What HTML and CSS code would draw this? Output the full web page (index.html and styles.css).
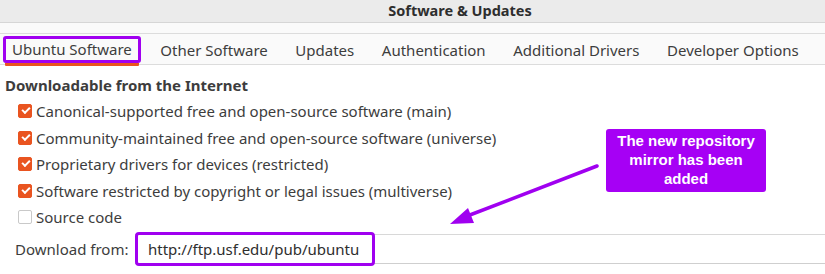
FILE: index.html
```html
<!DOCTYPE html>
<html lang="en">
<head>
    <meta charset="UTF-8">
    <title>Software &amp; Updates</title>
    <link rel="stylesheet" href="styles.css">
</head>
<body>
    <div class="window">
        <div class="titlebar">Software &amp; Updates</div>
        <div class="spacer"></div>
        <div class="tabs">
            <div class="tab active">Ubuntu Software</div>
            <div class="tab">Other Software</div>
            <div class="tab">Updates</div>
            <div class="tab">Authentication</div>
            <div class="tab">Additional Drivers</div>
            <div class="tab">Developer Options</div>
        </div>
        <div class="content">
            <h3>Downloadable from the Internet</h3>
            <label class="check"><span class="box on"></span>Canonical-supported free and open-source software (main)</label>
            <label class="check"><span class="box on"></span>Community-maintained free and open-source software (universe)</label>
            <label class="check"><span class="box on"></span>Proprietary drivers for devices (restricted)</label>
            <label class="check"><span class="box on"></span>Software restricted by copyright or legal issues (multiverse)</label>
            <label class="check"><span class="box"></span>Source code</label>
            <div class="download">
                <span class="download-label">Download from:</span>
                <div class="field">
                    <span class="field-value">http://ftp.usf.edu/pub/ubuntu</span>
                </div>
            </div>
        </div>

        <div class="callout">The new repository mirror has been added</div>
        <svg class="arrow" width="825" height="274" viewBox="0 0 825 274">
            <line x1="597" y1="166" x2="462" y2="218" stroke="#a000f0" stroke-width="3.5" stroke-linecap="round"/>
            <polygon points="450,224 468,208 474,223" fill="#a000f0"/>
        </svg>
    </div>
</body>
</html>
```

FILE: styles.css
```css
body {
    margin: 0;
    font-family: 'Noto Sans', sans-serif;
    color: #3d3d3d;
    background-color: #fff;
}
.window {
    position: relative;
    width: 825px;
    height: 274px;
    overflow: hidden;
}
.titlebar {
    height: 23px;
    line-height: 21px;
    background-color: #ebebeb;
    border-bottom: 1px solid #d6d6d6;
    text-align: center;
    font-weight: bold;
    font-size: 14.5px;
    color: #2e2e2e;
    padding-left: 95px;
    box-sizing: border-box;
}
.spacer {
    height: 11px;
    background-color: #fafafa;
    border-bottom: 1px solid #dcdcdc;
    box-sizing: border-box;
}
.tabs {
    display: flex;
    height: 31px;
    background-color: #fafafa;
    border-bottom: 1px solid #dcdcdc;
    box-sizing: border-box;
    padding-left: 3px;
    gap: 11.6px;
}
.tab {
    font-size: 15px;
    line-height: 29px;
    padding: 0 8px;
    margin-top: 2px;
    color: #3d3d3d;
}
.tab.active {
    border: 3px solid #a000f0;
    border-radius: 3px;
    line-height: 21px;
    padding: 0 6px 0 6px;
    height: 21px;
    box-shadow: 0 5px 0 -2px #e95420;
}
.content {
    padding: 10px 0 0 5px;
}
h3 {
    margin: 0 0 3px 0;
    font-size: 15px;
    font-weight: bold;
    line-height: 20px;
}
.check {
    display: flex;
    align-items: center;
    height: 26.5px;
    padding-left: 13px;
    font-size: 15px;
}
.box {
    width: 12px;
    height: 12px;
    border-radius: 2px;
    border: 1px solid #c9c9c9;
    background-color: #fff;
    margin-right: 4px;
    position: relative;
}
.box.on {
    background-color: #e95420;
    border-color: #e95420;
}
.box.on::after {
    content: "";
    position: absolute;
    left: 3px;
    top: 2px;
    width: 6px;
    height: 3px;
    border-left: 2px solid #fff;
    border-bottom: 2px solid #fff;
    transform: rotate(-45deg);
}
.download {
    display: flex;
    align-items: center;
    margin-top: 3px;
    margin-left: -5px;
}
.download-label {
    font-size: 15px;
    padding-left: 15px;
    width: 120px;
}
.field {
    flex: 1;
    height: 28px;
    border-top: 1px solid #d8d8d8;
    border-bottom: 1px solid #cfcfcf;
    display: flex;
    align-items: center;
}
.field-value {
    font-size: 15px;
    color: #2e2e2e;
    border: 3px solid #a000f0;
    border-radius: 4px;
    height: 28px;
    line-height: 28px;
    padding: 0 10px;
    margin-left: 0;
    width: 214px;
}
.callout {
    position: absolute;
    left: 606px;
    top: 129px;
    width: 160px;
    height: 63px;
    box-sizing: border-box;
    padding-top: 2px;
    background-color: #a600f5;
    border-radius: 3px;
    color: #fff;
    font-family: 'Liberation Sans', Arial, sans-serif;
    font-weight: bold;
    font-size: 15px;
    line-height: 19px;
    text-align: center;
}
.arrow {
    position: absolute;
    left: 0;
    top: 0;
    pointer-events: none;
}
```
